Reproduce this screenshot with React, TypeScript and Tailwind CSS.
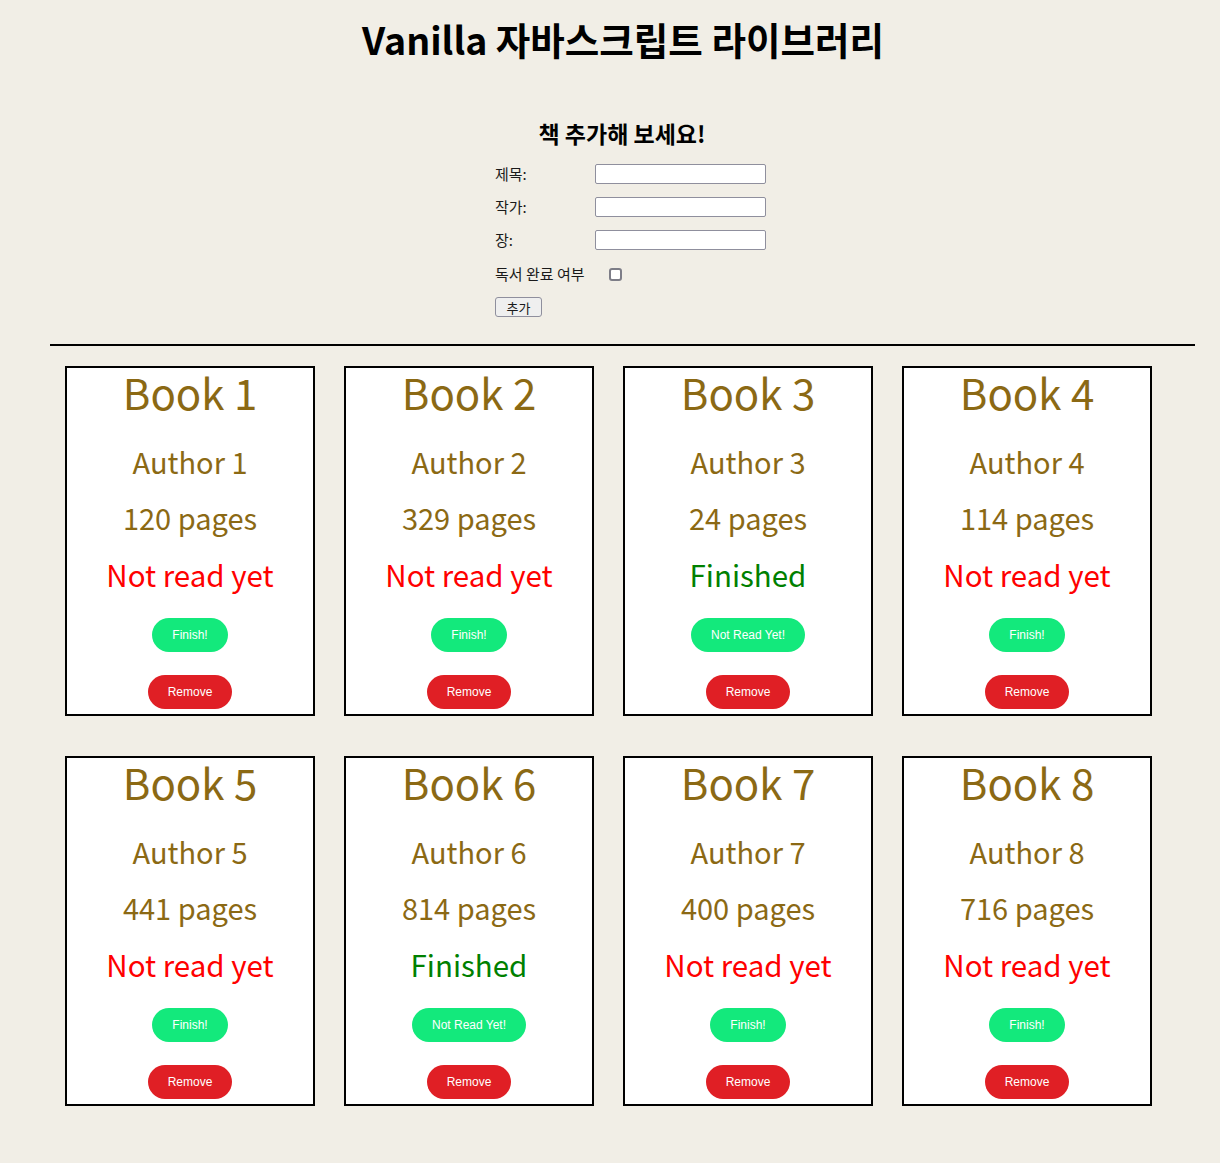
import React from "react";

type Book = {
  title: string;
  author: string;
  pages: number;
  read: boolean;
};

const books: Book[] = [
  { title: "Book 1", author: "Author 1", pages: 120, read: false },
  { title: "Book 2", author: "Author 2", pages: 329, read: false },
  { title: "Book 3", author: "Author 3", pages: 24, read: true },
  { title: "Book 4", author: "Author 4", pages: 114, read: false },
  { title: "Book 5", author: "Author 5", pages: 441, read: false },
  { title: "Book 6", author: "Author 6", pages: 814, read: true },
  { title: "Book 7", author: "Author 7", pages: 400, read: false },
  { title: "Book 8", author: "Author 8", pages: 716, read: false },
];

const BookCard = ({ book }: { book: Book }) => {
  const { title, author, pages, read } = book;
  return (
    <div className="w-[250px] h-[350px] bg-white border-2 border-black flex flex-col items-center text-[#8b6914]">
      <p className="text-[42px] leading-[47px]">{title}</p>
      <p className="mt-[28px] text-[29px] leading-[36px]">{author}</p>
      <p className="mt-[20px] text-[29px] leading-[36px]">{pages} pages</p>
      {/* read status */}
      <p
        className={`mt-[21px] text-[29.5px] leading-[36px] ${
          read ? "text-[#008000]" : "text-[#ff0000]"
        }`}
      >
        {read ? "Finished" : "Not read yet"}
      </p>
      <button className="mt-[26px] h-[34px] px-5 rounded-full bg-[#13e97c] text-white text-[12px] font-['Liberation_Sans',Arial,sans-serif]">
        {read ? "Not Read Yet!" : "Finish!"}
      </button>
      <button className="mt-[23px] h-[34px] px-5 rounded-full bg-[#e01f25] text-white text-[12px] font-['Liberation_Sans',Arial,sans-serif]">
        Remove
      </button>
    </div>
  );
};

const App = () => {
  return (
    <div className="min-h-screen bg-[#f1eee6] text-black font-['Noto_Sans_CJK_KR','Noto_Sans',sans-serif] pb-[57px]">
      <h1 className="pt-[19px] pl-[26px] text-center text-[37.5px] font-bold leading-[40px]">
        Vanilla 자바스크립트 라이브러리
      </h1>

      {/* add book form */}
      <div className="ml-[495px] w-[254px] mt-[61px] text-center text-[23px] font-bold leading-[26px]">
        책 추가해 보세요!
      </div>
      <form className="ml-[495px] mt-[18px] flex flex-col text-[15px] text-[#1a1a1a]">
        <div className="h-5 flex items-center">
          <label className="w-[100px]">제목:</label>
          <input className="w-[171px] h-5 bg-white border border-[#8f8f9d] rounded-[2px]" />
        </div>
        <div className="mt-[13px] h-5 flex items-center">
          <label className="w-[100px]">작가:</label>
          <input className="w-[171px] h-5 bg-white border border-[#8f8f9d] rounded-[2px]" />
        </div>
        <div className="mt-[13px] h-5 flex items-center">
          <label className="w-[100px]">장:</label>
          <input className="w-[171px] h-5 bg-white border border-[#8f8f9d] rounded-[2px]" />
        </div>
        <div className="mt-[14px] h-5 flex items-center">
          <label className="w-[100px]">독서 완료 여부</label>
          <input
            type="checkbox"
            className="ml-[14px] w-[13px] h-[13px] appearance-none bg-white border-2 border-[#7d7d87] rounded-[3px]"
          />
        </div>
        <div className="mt-[13px] h-5 flex items-center">
          <button
            type="button"
            className="w-[47px] h-5 bg-[#efefef] border border-[#8f8f9d] rounded-[3px] text-[13px] leading-none"
          >
            추가
          </button>
        </div>
      </form>

      <div className="mt-[27px] ml-[50px] w-[1145px] h-[2px] bg-black" />

      {/* book list */}
      <div className="mt-[20px] ml-[65px] grid grid-cols-[repeat(4,250px)] gap-x-[29px] gap-y-[40px]">
        {books.map((book) => (
          <BookCard key={book.title} book={book} />
        ))}
      </div>
    </div>
  );
};

export default App;
